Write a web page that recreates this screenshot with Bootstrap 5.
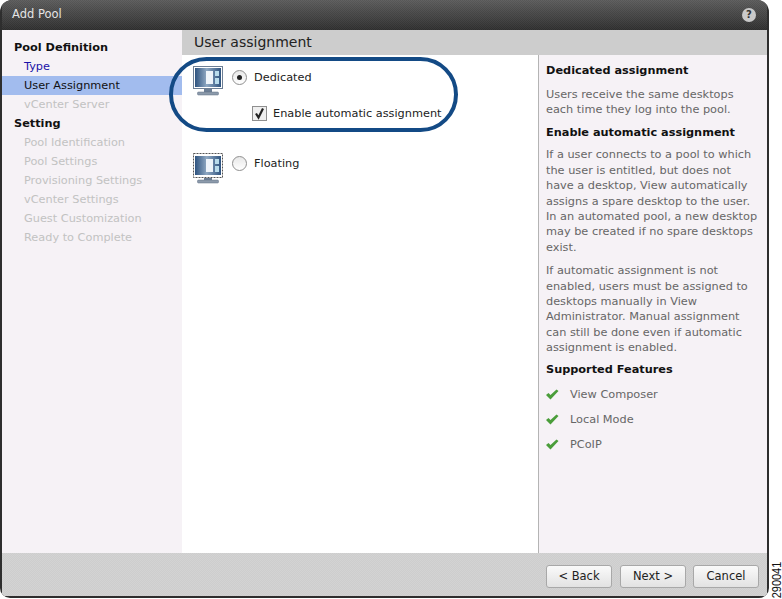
<!DOCTYPE html>
<html lang="en">
  <head>
    <meta charset="UTF-8" />
    <meta name="viewport" content="width=device-width, initial-scale=1.0" />
    <title>Add Pool</title>
    <link rel="stylesheet" href="https://cdn.jsdelivr.net/npm/bootstrap@5.3.0/dist/css/bootstrap.min.css" />
    <style>
      html, body { height: 100%; background: #fff; }
      body { font-family: "DejaVu Sans", Verdana, sans-serif; font-size: 11.3px; overflow: hidden; color: #222; }
      .stage { width: 782px; height: 599px; }
      .dialog { width: 769px; height: 598px; background: #2e2e2e; border-radius: 12px 12px 10px 10px; padding: 0 2px 2px 2px; overflow: hidden; }
      .titlebar { height: 30px; flex: none; background: repeating-conic-gradient(rgba(255,255,255,.035) 0 25%, rgba(0,0,0,.035) 0 50%) 0 0 / 2px 2px, linear-gradient(#5c5c5c, #2f2f2f); color: #e4e4e4; font-size: 11.5px; padding: 0 10px; }
      .help-dot { width: 14px; height: 14px; border-radius: 50%; background: #c9c9c9; color: #333; font-size: 10px; font-weight: 700; line-height: 14px; text-align: center; margin-right: 1px; }
      .middle { height: 523px; }
      .sidebar { width: 180px; background: #f6f2f6; padding-top: 8px; }
      .side-head { height: 19px; line-height: 19px; padding-left: 12px; font-weight: 700; color: #111; }
      .side-item { height: 19px; line-height: 19px; padding-left: 22px; color: #c2c2c2; }
      .side-item.done { color: #1a12a8; }
      .side-item.current { background: #a2bcee; color: #111; }
      .pane { background: #fff; min-width: 0; }
      .pane-head { height: 25px; line-height: 25px; background: #cdcdcd; font-size: 14px; color: #222; padding-left: 12px; }
      .pane-body { height: 498px; }
      .choices { width: 356px; padding: 11px 0 0 11px; position: relative; }
      .help-panel { width: 230px; background: #f6f2f6; border-left: 1px solid #b4b4b4; padding: 7.5px 0 0 7px; color: #666; line-height: 15.4px; white-space: nowrap; }
      .help-panel h6 { font-size: 11.3px; font-weight: 700; color: #111; margin: 0; line-height: 15px; }
      .help-panel p { margin: 0; }
      .gap-a { margin-top: 9px !important; }
      .gap-b { margin-top: 8px !important; }
      .gap-c { margin-top: 7px !important; }
      .gap-d { margin-top: 6px !important; margin-bottom: 6px !important; }
      .oval { position: absolute; left: -13px; top: 2px; width: 289px; height: 75px; border: 4px solid #134a85; border-radius: 38px; pointer-events: none; }
      .fake-radio { width: 15px; height: 15px; margin-left: 1px; margin-right: -1px; border-radius: 50%; border: 1px solid #8f8f8f; background: linear-gradient(#e8e8e8, #fff); flex: none; }
      .fake-radio.on::after { content: ""; display: block; width: 5px; height: 5px; margin: 4px; border-radius: 50%; background: #222; }
      .fake-check { width: 15px; height: 15px; border: 1px solid #8f8f8f; background: #efefef; flex: none; }
      .choice-row { height: 36px; }
      .sub-row { padding-left: 59px; height: 18px; margin-top: 2px; gap: 6px; }
      .floating { margin-top: 31px; }
      .choice-label { color: #222; line-height: 15px; }
      .float-offset { margin-top: 3px; }
      .feature { height: 25px; }
      .footer-bar { height: 44px; background: repeating-conic-gradient(#d3d3d3 0 25%, #cdcdcd 0 50%) 0 0 / 2px 2px; padding-right: 8px; padding-bottom: 8px; }
      .btn-plain { width: 66px; height: 23px; padding: 0; font-size: 11.5px; line-height: 21px; color: #222; border: 1px solid #a8a8a8; border-radius: 3px; background: linear-gradient(#fafafa, #e2e2e2); font-family: inherit; }
      .btn-plain.cancel { margin-left: -1px; }
      .serial { position: absolute; left: 757px; top: 574px; width: 38px; height: 12px; line-height: 12px; text-align: center; font-family: "Liberation Sans", Arial, sans-serif; font-size: 11px; color: #111; transform: rotate(-90deg) scaleY(1.15); transform-origin: center; }
    </style>
  </head>
  <body class="m-0">
    <div class="stage position-relative">
      <div class="dialog d-flex flex-column">
        <div class="titlebar d-flex align-items-center justify-content-between">
          <span>Add Pool</span>
          <span class="help-dot">?</span>
        </div>

        <div class="middle d-flex">
          <div class="sidebar flex-shrink-0">
            <div class="side-head">Pool Definition</div>
            <div class="side-item done">Type</div>
            <div class="side-item current">User Assignment</div>
            <div class="side-item">vCenter Server</div>
            <div class="side-head">Setting</div>
            <div class="side-item">Pool Identification</div>
            <div class="side-item">Pool Settings</div>
            <div class="side-item">Provisioning Settings</div>
            <div class="side-item">vCenter Settings</div>
            <div class="side-item">Guest Customization</div>
            <div class="side-item">Ready to Complete</div>
          </div>

          <div class="pane flex-grow-1">
            <div class="pane-head">User assignment</div>
            <div class="pane-body d-flex">
              <div class="choices flex-shrink-0">
                <svg width="0" height="0" class="position-absolute">
                  <defs>
                    <linearGradient id="screenFill" x1="0" x2="1" y1="0" y2="0">
                      <stop offset="0" stop-color="#2f5480" />
                      <stop offset="0.45" stop-color="#8fa8c2" />
                      <stop offset="1" stop-color="#2f5480" />
                    </linearGradient>
                  </defs>
                </svg>
                <div class="d-flex gap-2 choice-row">
                  <svg width="30" height="30" viewBox="0 0 30 30">
                    <rect x="0.5" y="0.5" width="29" height="22" fill="#fff" stroke="#6d7f95" />
                    <rect x="2" y="2" width="26" height="19" fill="url(#screenFill)" />
                    <rect x="13" y="5" width="7" height="13" fill="#eef4fa" />
                    <rect x="22" y="5" width="4" height="5" fill="#b9dcec" />
                    <rect x="22" y="12" width="4" height="6" fill="#b9dcec" />
                    <rect x="11" y="23" width="8" height="3" fill="#6d7f95" />
                    <rect x="4.5" y="26" width="21" height="3" rx="1" fill="#8c9aab" stroke="#5c6c80" stroke-width="0.5" />
                  </svg>
                  <span class="fake-radio on mt-1"></span>
                  <span class="choice-label mt-1">Dedicated</span>
                </div>
                <div class="sub-row d-flex align-items-center">
                  <span class="fake-check d-flex">
                    <svg width="13" height="13" viewBox="0 0 13 13"><path d="M3 6.5 L5.5 10.5 L10 1.5" fill="none" stroke="#222" stroke-width="2.2" /></svg>
                  </span>
                  <span class="choice-label">Enable automatic assignment</span>
                </div>
                <div class="d-flex gap-2 floating">
                  <svg width="30" height="31" viewBox="0 0 30 31">
                    <rect x="0.5" y="0.5" width="29" height="24" fill="#fff" stroke="#555" stroke-dasharray="2 1" />
                    <rect x="2" y="3" width="26" height="19" fill="url(#screenFill)" />
                    <rect x="13" y="6" width="7" height="13" fill="#eef4fa" />
                    <rect x="22" y="6" width="4" height="5" fill="#b9dcec" />
                    <rect x="22" y="13" width="4" height="6" fill="#b9dcec" />
                    <rect x="11" y="25" width="8" height="2" fill="#6d7f95" />
                    <rect x="4.5" y="27" width="21" height="3" rx="1" fill="#8c9aab" stroke="#5c6c80" stroke-width="0.5" />
                  </svg>
                  <span class="fake-radio float-offset"></span>
                  <span class="choice-label float-offset">Floating</span>
                </div>
                <div class="oval"></div>
              </div>

              <div class="help-panel flex-grow-1">
                <h6>Dedicated assignment</h6>
                <p class="gap-a">Users receive the same desktops<br />each time they log into the pool.</p>
                <h6 class="gap-b">Enable automatic assignment</h6>
                <p class="gap-c">If a user connects to a pool to which<br />the user is entitled, but does not<br />have a desktop, View automatically<br />assigns a spare desktop to the user.<br />In an automated pool, a new desktop<br />may be created if no spare desktops<br />exist.</p>
                <p class="gap-b">If automatic assignment is not<br />enabled, users must be assigned to<br />desktops manually in View<br />Administrator. Manual assignment<br />can still be done even if automatic<br />assignment is enabled.</p>
                <h6 class="gap-d">Supported Features</h6>
                <div class="feature d-flex align-items-center gap-2">
                  <svg width="16" height="12" viewBox="0 0 16 12"><path d="M0 6 L2.5 4 L4.5 6 L10.5 0.5 L12.5 2 L4.5 10.5 Z" fill="#4a9d3a" /></svg>
                  <span>View Composer</span>
                </div>
                <div class="feature d-flex align-items-center gap-2">
                  <svg width="16" height="12" viewBox="0 0 16 12"><path d="M0 6 L2.5 4 L4.5 6 L10.5 0.5 L12.5 2 L4.5 10.5 Z" fill="#4a9d3a" /></svg>
                  <span>Local Mode</span>
                </div>
                <div class="feature d-flex align-items-center gap-2">
                  <svg width="16" height="12" viewBox="0 0 16 12"><path d="M0 6 L2.5 4 L4.5 6 L10.5 0.5 L12.5 2 L4.5 10.5 Z" fill="#4a9d3a" /></svg>
                  <span>PCoIP</span>
                </div>
              </div>
            </div>
          </div>
        </div>

        <div class="footer-bar d-flex align-items-end justify-content-end gap-2">
          <button type="button" class="btn btn-plain">&lt; Back</button>
          <button type="button" class="btn btn-plain">Next &gt;</button>
          <button type="button" class="btn btn-plain cancel">Cancel</button>
        </div>
      </div>
      <div class="serial">290041</div>
    </div>

    <script src="https://cdn.jsdelivr.net/npm/bootstrap@5.3.0/dist/js/bootstrap.bundle.min.js"></script>
  </body>
</html>
